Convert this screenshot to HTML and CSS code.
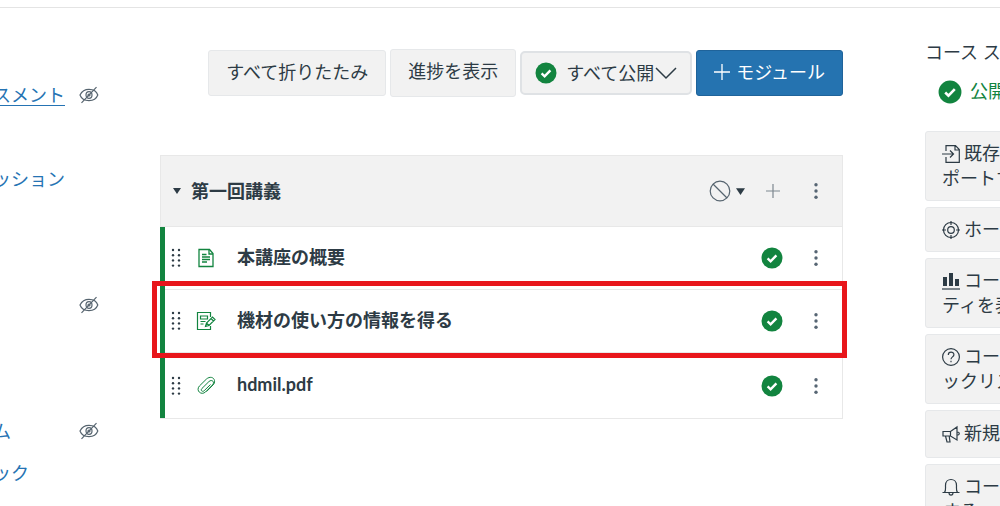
FILE: index.html
```
<!DOCTYPE html>
<html lang="ja">
<head>
    <meta charset="UTF-8">
    <meta name="viewport" content="width=device-width, initial-scale=1.0">
    <title>モジュール</title>
    <link rel="stylesheet" href="styles.css">
</head>

<body>
    <!-- Shared icons -->
    <svg class="sprite" aria-hidden="true">
        <symbol id="check" viewBox="0 0 22 22">
            <circle cx="11" cy="11" r="10.5" fill="#12843f" />
            <path d="M6.6 11.4l3 2.9 5.8-6" fill="none" stroke="#fff" stroke-width="2.4" />
        </symbol>
        <symbol id="eye-off" viewBox="0 0 20 18">
            <g fill="none" stroke="currentColor" stroke-width="1.2">
                <path d="M1 9c2-4 5.500-5.600 9-5.600S17.500 5 18.800 9c-1.500 4-5.300 5.600-8.800 5.600S2.500 13 1 9z" />
                <ellipse cx="10" cy="9" rx="3" ry="3.400" />
                <circle cx="10" cy="9" r="1" />
                <path d="M2.500 16.800L17.500 1.200" />
            </g>
        </symbol>
        <symbol id="kebab" viewBox="0 0 6 18">
            <g fill="#566573">
                <circle cx="3" cy="2.700" r="1.700" />
                <circle cx="3" cy="9" r="1.700" />
                <circle cx="3" cy="15.300" r="1.700" />
            </g>
        </symbol>
        <symbol id="grip" viewBox="0 0 10 20">
            <g fill="#2d3b45">
                <circle cx="2" cy="2" r="1.200" /><circle cx="8" cy="2" r="1.200" />
                <circle cx="2" cy="7.200" r="1.200" /><circle cx="8" cy="7.200" r="1.200" />
                <circle cx="2" cy="12.400" r="1.200" /><circle cx="8" cy="12.400" r="1.200" />
                <circle cx="2" cy="17.600" r="1.200" /><circle cx="8" cy="17.600" r="1.200" />
            </g>
        </symbol>
        <symbol id="caret" viewBox="0 0 8 6">
            <path d="M0 0h8L4 6z" fill="#2d3b45" />
        </symbol>
    </svg>

    <div class="page">
        <nav class="course-nav" aria-label="コースナビゲーション">
            <ul>
                <li><a class="underlined" href="#">スメント</a><svg class="hidden-icon"><use href="#eye-off" /></svg></li>
                <li></li>
                <li><a href="#">ッション</a></li>
                <li></li>
                <li></li>
                <li><svg class="hidden-icon"><use href="#eye-off" /></svg></li>
                <li></li>
                <li></li>
                <li><a href="#">ム</a><svg class="hidden-icon"><use href="#eye-off" /></svg></li>
                <li><a href="#">ック</a></li>
            </ul>
        </nav>

        <main>
            <div class="toolbar">
                <button class="btn">すべて折りたたみ</button>
                <button class="btn btn-progress">進捗を表示</button>
                <button class="btn btn-publish">
                    <svg width="22" height="22"><use href="#check" /></svg>
                    <span>すべて公開</span>
                    <svg class="chevron" width="22" height="14" viewBox="0 0 22 14"><path d="M1 2l10 10L21 2" fill="none" stroke="#2d3b45" stroke-width="1.500" /></svg>
                </button>
                <button class="btn btn-primary">
                    <svg width="16" height="16" viewBox="0 0 16 16"><path d="M8 0v16M0 8h16" stroke="#fff" stroke-width="1.300" /></svg>
                    <span>モジュール</span>
                </button>
            </div>

            <section class="module">
                <header class="module-header">
                    <button class="icon-btn" aria-label="折りたたむ"><svg width="8" height="6"><use href="#caret" /></svg></button>
                    <h2>第一回講義</h2>
                    <button class="icon-btn status" aria-label="未公開">
                        <svg width="22" height="22" viewBox="0 0 22 22"><g fill="none" stroke="#56646f" stroke-width="1.200"><circle cx="11" cy="11" r="9.800" /><path d="M4 4l14 14" /></g></svg>
                        <svg width="9" height="7"><use href="#caret" /></svg>
                    </button>
                    <button class="icon-btn add" aria-label="追加"><svg width="16" height="16" viewBox="0 0 16 16"><path d="M8 1v14M1 8h14" stroke="#7d878f" stroke-width="1.200" /></svg></button>
                    <button class="icon-btn menu" aria-label="メニュー"><svg width="6" height="18"><use href="#kebab" /></svg></button>
                </header>

                <ul class="items">
                    <li class="item">
                        <svg class="grip"><use href="#grip" /></svg>
                        <svg class="type" viewBox="0 0 20 20"><g fill="none" stroke="#12843f" stroke-width="1.300"><path d="M3 1.500h10.500l3.500 4v13H3z" /><path d="M13 1.500v4.500h4" /><path d="M6 6.500h4.500M6 9h8M6 11.500h8M6 14h5" /></g></svg>
                        <a href="#">本講座の概要</a>
                        <button class="icon-btn check" aria-label="公開済み"><svg width="22" height="22"><use href="#check" /></svg></button>
                        <button class="icon-btn menu" aria-label="メニュー"><svg width="6" height="18"><use href="#kebab" /></svg></button>
                    </li>
                    <li class="item highlighted">
                        <svg class="grip"><use href="#grip" /></svg>
                        <svg class="type" viewBox="0 0 20 20"><g fill="none" stroke="#12843f" stroke-width="1.200"><path d="M14.500 6V1.500h-13v17h13V15" /><path d="M4.500 5h7v3h-7zM4.500 10.500h5M4.500 13h3" /><path d="M9.500 15.500l1-3.500 6-6 2.500 2.500-6 6zM15 7.500l2.500 2.500M10.500 12l2.500 2.500" /></g></svg>
                        <a href="#">機材の使い方の情報を得る</a>
                        <button class="icon-btn check" aria-label="公開済み"><svg width="22" height="22"><use href="#check" /></svg></button>
                        <button class="icon-btn menu" aria-label="メニュー"><svg width="6" height="18"><use href="#kebab" /></svg></button>
                    </li>
                    <li class="item">
                        <svg class="grip"><use href="#grip" /></svg>
                        <svg class="type" viewBox="0 0 20 20"><path d="M14.500 8.500l-6.300 6.200c-1.800 1.700-4-.4-2.300-2.200l7-6.900c3-2.800 6.300.4 3.600 3.300l-6.900 7c-4.300 4-10.200-1.300-6.200-5.900l7-6.900c3.300-3 7.500-2 8.100 1.500.3 1.800-.3 3.200-1.500 4.400l-6.500 6.600" fill="none" stroke="#12843f" stroke-width="1" /></svg>
                        <a href="#">hdmil.pdf</a>
                        <button class="icon-btn check" aria-label="公開済み"><svg width="22" height="22"><use href="#check" /></svg></button>
                        <button class="icon-btn menu" aria-label="メニュー"><svg width="6" height="18"><use href="#kebab" /></svg></button>
                    </li>
                </ul>
            </section>
        </main>

        <aside>
            <h3>コース ス</h3>
            <p class="published"><svg width="24" height="24"><use href="#check" /></svg>公開</p>
            <div class="actions">
                <button class="side-btn">
                    <svg viewBox="0 0 18 18"><path d="M4 6V.700h9.500L17.300 4.500v12.800H4V12M13 .700V5h4.300M0 9h11.500M8 5.500L11.500 9 8 12.500" /></svg>既存の<br>ポートす
                </button>
                <button class="side-btn">
                    <svg viewBox="0 0 18 18"><circle cx="9" cy="9" r="7.500" /><circle cx="9" cy="9" r="3.300" /><path d="M9 0v4M9 14v4M0 9h4M14 9h4" /></svg>ホーム
                </button>
                <button class="side-btn">
                    <svg viewBox="0 0 18 18"><path d="M0 17h18" /><path class="solid" d="M1 5h4v9H1zM7 1h4v13H7zM13 7h4v7h-4z" /></svg>コース<br>ティを表
                </button>
                <button class="side-btn">
                    <svg viewBox="0 0 18 18"><circle cx="9" cy="9" r="8.400" /><path d="M6.300 7c0-3.800 5.600-3.600 5.600-.3C11.900 9 9 8.800 9 11.300M9 12.700v1.600" /></svg>コース<br>ックリス
                </button>
                <button class="side-btn tall">
                    <svg viewBox="0 0 18 18"><path d="M1 6.500h7.500L15 2v13l-6.500-4H1zM8.500 6.500V11M3.500 11l1.500 6h3l-.8-6M15 7c3-.3 3 3.300 0 3" /></svg>新規お
                </button>
                <button class="side-btn">
                    <svg viewBox="0 0 18 18"><path d="M.500 14.500h17M2.500 14.500C4 13 3.500 11 3.500 7.500 3.500-.5 14.500-.5 14.500 7.500c0 3.500-.5 5.500 1 7M7 14.800c0 3.200 4 3.200 4 0" /></svg>コース<br>する
                </button>
            </div>
        </aside>
    </div>
</body>
</html>
```
FILE: styles.css
```
* {
    box-sizing: border-box;
}

body {
    font-family: Lato, "Noto Sans CJK JP", sans-serif;
    font-size: 18px;
    line-height: 25px;
    margin: 0;
    color: #2d3b45;
    background-color: #fff;
    overflow: hidden;
}

button {
    font: inherit;
    color: inherit;
    cursor: pointer;
}

ul {
    list-style: none;
    margin: 0;
    padding: 0;
}

svg {
    flex: none;
}

.sprite {
    display: none;
}

.page {
    display: grid;
    grid-template-columns: 160px minmax(0, 1fr) 75px;
    margin-top: 7px;
    border-top: 1px solid #e4e4e4;
}

/* Left course navigation, scrolled partly out of view */
.course-nav {
    padding-top: 66px;
    margin-left: -7px;
}

.course-nav li {
    display: flex;
    align-items: center;
    height: 42px;
    padding-right: 61px;
}

.course-nav a {
    color: #2573b3;
    text-decoration: none;
}

.course-nav .underlined {
    text-decoration: underline;
    text-underline-offset: 3px;
}

.hidden-icon {
    width: 20px;
    height: 18px;
    margin-left: auto;
    color: #56646f;
}

main {
    padding-top: 41px;
    margin-right: 82px;
}

.toolbar {
    display: flex;
    justify-content: flex-end;
    align-items: center;
    gap: 4px;
}

.btn {
    display: flex;
    align-items: center;
    height: 46px;
    padding: 0 17px 2px;
    background-color: #f2f2f2;
    border: 1px solid #e6e8ea;
    border-radius: 3px;
    white-space: nowrap;
}

.btn-progress {
    height: 48px;
    padding-bottom: 4px;
}

.btn-publish {
    gap: 9px;
    height: 44px;
    padding: 0 13px;
    border: 2px solid #dfe2e5;
    border-radius: 5px;
}

.btn-publish .chevron {
    margin-left: -8px;
}

.btn-primary {
    gap: 6px;
    background-color: #2573b0;
    border-color: #1f639a;
    color: #fff;
}

.module {
    margin-top: 58px;
    border: 1px solid #e8e8e8;
}

.module-header {
    display: flex;
    align-items: center;
    height: 71px;
    padding: 0 23px 0 12px;
    background-color: #f2f2f2;
    border-bottom: 1px solid #e8e8e8;
}

.module-header h2 {
    flex: 1;
    margin: 0 0 0 10px;
    font-size: 18px;
}

.icon-btn {
    display: flex;
    align-items: center;
    padding: 0;
    border: none;
    background: none;
}

.status {
    gap: 5px;
}

.add {
    margin-left: 20px;
}

.menu {
    margin-left: 32px;
}

.items {
    margin-left: -1px;
    border-left: 5px solid #12843f;
}

.item {
    display: flex;
    align-items: center;
    position: relative;
    height: 62px;
    padding: 0 23px 0 6px;
}

.item + .item {
    height: 63px;
    border-top: 1px solid #e8e8e8;
}

.item:last-child {
    height: 66px;
}

.item a {
    flex: 1;
    padding-bottom: 2px;
    color: inherit;
    font-weight: bold;
    text-decoration: none;
}

.item .menu {
    margin-left: 30px;
}

.grip {
    width: 10px;
    height: 20px;
}

.type {
    width: 20px;
    height: 20px;
    margin: 0 21px 0 15px;
}

/* Red frame around the item being explained */
.highlighted::after {
    content: "";
    position: absolute;
    z-index: 1;
    top: -9px;
    right: -5px;
    bottom: -6px;
    left: -13px;
    border: 5px solid #e8161b;
}

/* Right sidebar runs past the window edge */
aside {
    padding-top: 32px;
    white-space: nowrap;
}

aside h3 {
    margin: 0;
    font-size: 18px;
    font-weight: normal;
}

.published {
    display: flex;
    align-items: center;
    gap: 8px;
    margin: 14px 0 27px 13px;
    color: #12843f;
}

.actions {
    display: flex;
    flex-direction: column;
    gap: 6px;
    width: 240px;
}

.side-btn {
    padding: 9px 16px;
    background-color: #f2f2f2;
    border: 1px solid #e6e8ea;
    border-radius: 3px;
    text-align: left;
}

.side-btn.tall {
    padding: 10px 16px 11px;
}

.side-btn svg {
    width: 18px;
    height: 18px;
    margin-right: 4px;
    vertical-align: -3px;
    fill: none;
    stroke: #2d3b45;
    stroke-width: 1.2;
}

.side-btn .solid {
    fill: #2d3b45;
    stroke: none;
}
```
